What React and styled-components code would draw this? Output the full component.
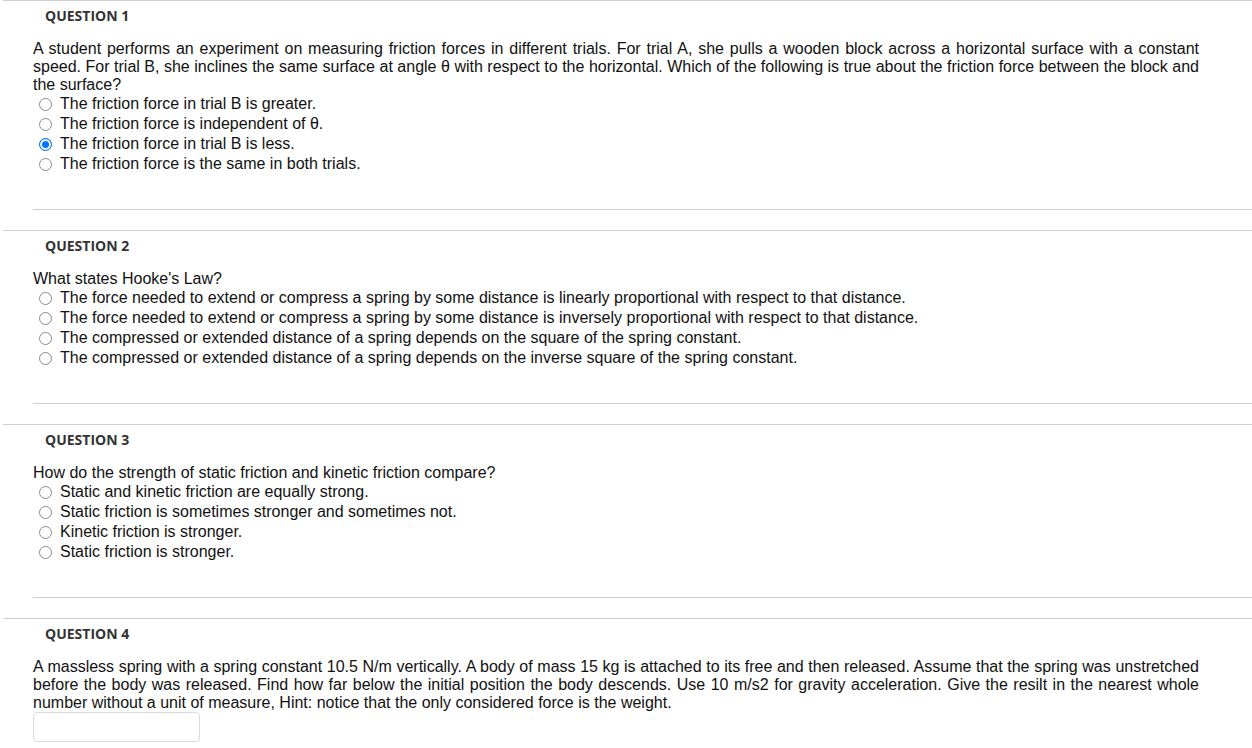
import React from "react";
import styled, { createGlobalStyle } from "styled-components";

const Global = createGlobalStyle`
  html, body { margin: 0; padding: 0; background: #fff; }
  body { font-family: "Liberation Sans", Arial, sans-serif; color: #111; overflow: hidden; }
`;

const Page = styled.div`
  padding-left: 3px;
  width: 1249px;
`;

const Section = styled.section`
  border-top: 1px solid #cfcfcf;
  padding-top: 6px;
  padding-bottom: 20px;
`;

const Title = styled.h3`
  margin: 0 0 15px 42px;
  font-family: "Open Sans", sans-serif;
  font-weight: 700;
  font-size: 14px;
  line-height: 18px;
  color: #333;
`;

const Body = styled.div`
  margin-left: 30px;
  padding-bottom: 35px;
  border-bottom: 1px solid #cfcfcf;
  ${(p) => p.$last && "border-bottom: none; padding-bottom: 0;"}
`;

const Prompt = styled.p`
  margin: 0;
  width: 1166px;
  font-size: 16px;
  line-height: 18px;
  text-align: justify;
  color: #111;
`;

const Options = styled.div`
  display: flex;
  flex-direction: column;
`;

const Option = styled.label`
  display: flex;
  align-items: center;
  height: 20px;
  font-size: 16px;
  color: #111;
  padding-left: 6px;
  gap: 8px;
`;

const Radio = styled.span`
  width: 13px;
  height: 13px;
  box-sizing: border-box;
  border-radius: 50%;
  border: 1px solid ${(p) => (p.$checked ? "#0075ff" : "#8a8a8a")};
  background: ${(p) => (p.$checked ? "#0075ff" : "#fff")};
  box-shadow: ${(p) => (p.$checked ? "inset 0 0 0 2px #fff" : "none")};
  flex-shrink: 0;
`;

const Answer = styled.div`
  margin-top: 0;
  width: 167px;
  height: 30px;
  box-sizing: border-box;
  border: 1px solid #dcdcdc;
  border-radius: 4px;
`;

const questions = [
  {
    n: 1,
    text:
      "A student performs an experiment on measuring friction forces in different trials. For trial A, she pulls a wooden block across a horizontal surface with a constant speed. For trial B, she inclines the same surface at angle θ with respect to the horizontal. Which of the following is true about the friction force between the block and the surface?",
    options: [
      "The friction force in trial B is greater.",
      "The friction force is independent of θ.",
      "The friction force in trial B is less.",
      "The friction force is the same in both trials.",
    ],
    checked: 2,
  },
  {
    n: 2,
    text: "What states Hooke's Law?",
    options: [
      "The force needed to extend or compress a spring by some distance is linearly proportional with respect to that distance.",
      "The force needed to extend or compress a spring by some distance is inversely proportional with respect to that distance.",
      "The compressed or extended distance of a spring depends on the square of the spring constant.",
      "The compressed or extended distance of a spring depends on the inverse square of the spring constant.",
    ],
    checked: -1,
  },
  {
    n: 3,
    text: "How do the strength of static friction and kinetic friction compare?",
    options: [
      "Static and kinetic friction are equally strong.",
      "Static friction is sometimes stronger and sometimes not.",
      "Kinetic friction is stronger.",
      "Static friction is stronger.",
    ],
    checked: -1,
  },
  {
    n: 4,
    text:
      "A massless spring with a spring constant 10.5 N/m vertically. A body of mass 15 kg is attached to its free and then released. Assume that the spring was unstretched before the body was released. Find how far below the initial position the body descends. Use 10 m/s2 for gravity acceleration. Give the resilt in the nearest whole number without a unit of measure, Hint: notice that the only considered force is the weight.",
    input: true,
  },
];

export default function App() {
  return (
    <Page>
      <Global />
      {questions.map((q, qi) => (
        <Section key={q.n}>
          <Title>QUESTION {q.n}</Title>
          <Body $last={qi === questions.length - 1}>
            <Prompt>{q.text}</Prompt>
            {q.options && (
              <Options>
                {q.options.map((o, i) => (
                  <Option key={i}>
                    <Radio $checked={i === q.checked} />
                    {o}
                  </Option>
                ))}
              </Options>
            )}
            {q.input && <Answer />}
          </Body>
        </Section>
      ))}
    </Page>
  );
}
